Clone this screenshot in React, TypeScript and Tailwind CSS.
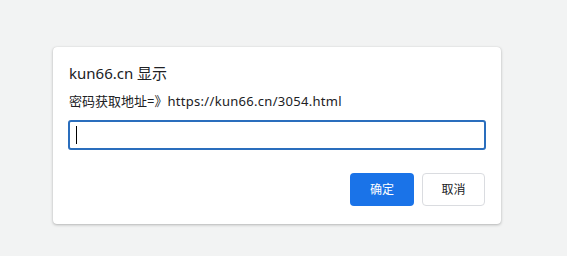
import React from "react";

export default function App() {
  return (
    <div
      className="w-full h-[256px] bg-[#f2f3f3] pt-[47px] pl-[53px]"
      style={{ fontFamily: '"Noto Sans", "Noto Sans CJK SC", sans-serif' }}
    >
      <div className="w-[448px] h-[177px] bg-white rounded-[4px] shadow-[0_1px_3px_rgba(0,0,0,0.25),0_0_1px_rgba(0,0,0,0.15)] px-[15px] pt-[16px] flex flex-col">
        <div className="pl-[1px] text-[15px] leading-[20px] text-[#202124]">kun66.cn 显示</div>
        <div className="pl-[1px] mt-[9px] text-[13px] leading-[18px] text-[#202124]">
          密码获取地址=》<span className="tracking-[0.3px]">https://kun66.cn/3054.html</span>
        </div>
        <div className="mt-[10px] h-[30px] w-[418px] border-2 border-[#2a6ebd] rounded-[3px] flex items-center pl-[6px]">
          <div className="w-[1px] h-[18px] bg-black" />
        </div>
        <div className="mt-[23px] flex justify-end gap-[8px] pr-[1px]">
          <button className="w-[64px] h-[33px] rounded-[4px] bg-[#1a73e8] text-white text-[12px]">确定</button>
          <button className="w-[63px] h-[33px] rounded-[4px] bg-white border border-[#dadce0] text-[#202124] text-[12px]">取消</button>
        </div>
      </div>
    </div>
  );
}
